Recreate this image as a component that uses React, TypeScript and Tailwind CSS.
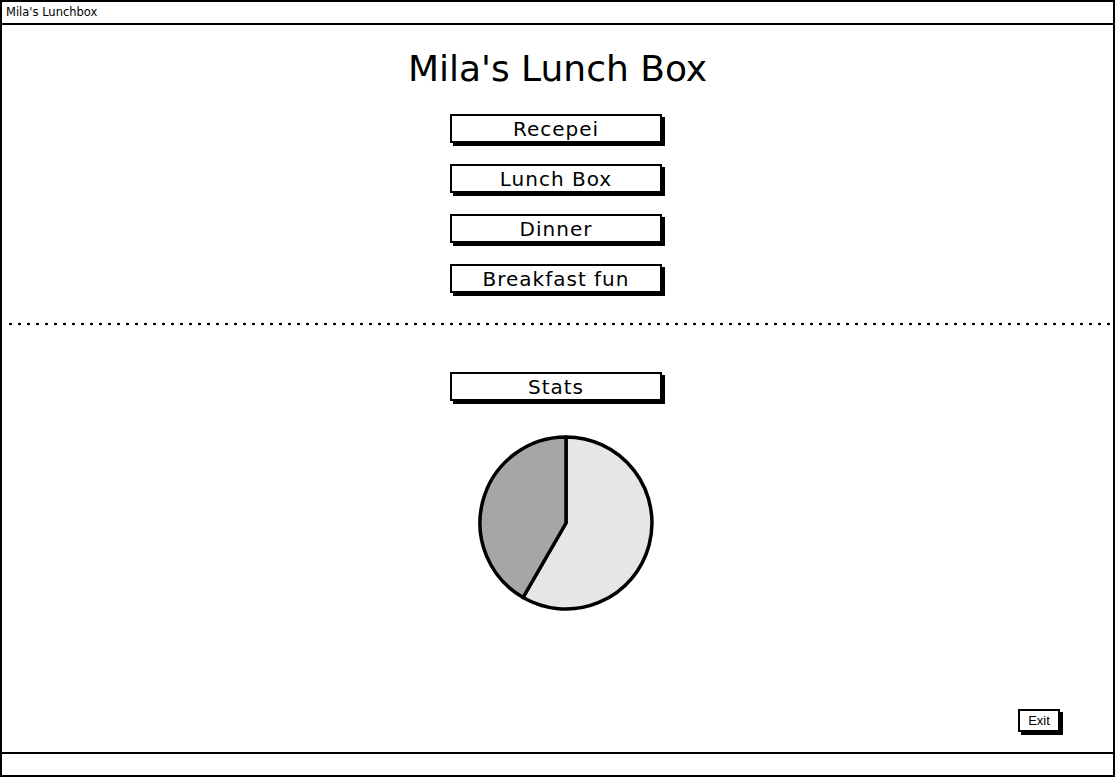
const menu = ["Recepei", "Lunch Box", "Dinner", "Breakfast fun"];

function SketchButton(props: { label: string }) {
    return (
        <div className="w-[212px] h-[29px] border-2 border-black bg-white shadow-[3px_3px_0_0_#000] flex items-center justify-center text-[20px] tracking-[0.05em] leading-none text-black">
            {props.label}
        </div>
    );
}

function Pie() {
    return (
        <svg width="180" height="180" viewBox="0 0 180 180" className="mt-[32px] ml-[16px]">
            <path d="M90,90 L90,4 A86,86 0 1 1 47,164.5 Z" fill="#e6e6e6" stroke="#000" strokeWidth="3.5" strokeLinejoin="round" />
            <path d="M90,90 L47,164.5 A86,86 0 0 1 90,4 Z" fill="#a6a6a6" stroke="#000" strokeWidth="3.5" strokeLinejoin="round" />
        </svg>
    );
}

export default function App() {
    return (
        <div className="w-[1115px] h-[777px] bg-white border-2 border-black flex flex-col font-['DejaVu_Sans',sans-serif] text-black">
            <div className="h-[21px] border-b-2 border-black box-content flex items-center px-[4px] text-[11.5px]">
                Mila's Lunchbox
            </div>

            <div className="flex-1 flex flex-col items-center">
                <h1 className="mt-[22px] text-[36px] leading-[44px]">Mila's Lunch Box</h1>

                <div className="mt-[23px] mr-[3px] flex flex-col gap-[21px]">
                    {menu.map((m) => <SketchButton key={m} label={m} />)}
                </div>

                <div className="mt-[29px] h-[4px] self-stretch ml-[4px] mr-[2px] bg-[radial-gradient(circle,#000_1.2px,transparent_1.6px)] bg-size-[9px_4px]" />

                <div className="mt-[46px] mr-[3px]">
                    <SketchButton label="Stats" />
                </div>

                <Pie />

                <div className="mt-auto self-end mr-[53px] mb-[20px] w-[42px] h-[23px] border-2 border-black bg-white shadow-[3px_3px_0_0_#000] flex items-center justify-center text-[13px] font-['Liberation_Sans',sans-serif]">
                    Exit
                </div>
            </div>

            <div className="h-[21px] border-t-2 border-black box-content" />
        </div>
    );
}
